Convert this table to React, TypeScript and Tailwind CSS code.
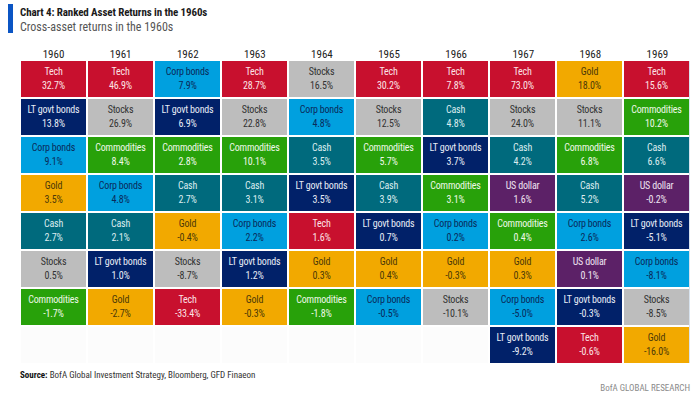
import React from 'react';

type Cell = [string, string];

const COLORS: Record<string, string> = {
  'Tech': 'bg-[#c8102e] text-[#fbe3e6]',
  'LT govt bonds': 'bg-[#012169] text-[#e6ebf5]',
  'Corp bonds': 'bg-[#00a0df] text-[#0a2a5a]',
  'Stocks': 'bg-[#bdbdbd] text-[#333333]',
  'Gold': 'bg-[#f2a900] text-[#4d3a08]',
  'Commodities': 'bg-[#28a10a] text-[#eef8e8]',
  'Cash': 'bg-[#006a7d] text-[#dcecef]',
  'US dollar': 'bg-[#5c2167] text-[#efe3f1]',
};

const YEARS: { year: string; cells: Cell[] }[] = [
  { year: '1960', cells: [['Tech', '32.7%'], ['LT govt bonds', '13.8%'], ['Corp bonds', '9.1%'], ['Gold', '3.5%'], ['Cash', '2.7%'], ['Stocks', '0.5%'], ['Commodities', '-1.7%']] },
  { year: '1961', cells: [['Tech', '46.9%'], ['Stocks', '26.9%'], ['Commodities', '8.4%'], ['Corp bonds', '4.8%'], ['Cash', '2.1%'], ['LT govt bonds', '1.0%'], ['Gold', '-2.7%']] },
  { year: '1962', cells: [['Corp bonds', '7.9%'], ['LT govt bonds', '6.9%'], ['Commodities', '2.8%'], ['Cash', '2.7%'], ['Gold', '-0.4%'], ['Stocks', '-8.7%'], ['Tech', '-33.4%']] },
  { year: '1963', cells: [['Tech', '28.7%'], ['Stocks', '22.8%'], ['Commodities', '10.1%'], ['Cash', '3.1%'], ['Corp bonds', '2.2%'], ['LT govt bonds', '1.2%'], ['Gold', '-0.3%']] },
  { year: '1964', cells: [['Stocks', '16.5%'], ['Corp bonds', '4.8%'], ['Cash', '3.5%'], ['LT govt bonds', '3.5%'], ['Tech', '1.6%'], ['Gold', '0.3%'], ['Commodities', '-1.8%']] },
  { year: '1965', cells: [['Tech', '30.2%'], ['Stocks', '12.5%'], ['Commodities', '5.7%'], ['Cash', '3.9%'], ['LT govt bonds', '0.7%'], ['Gold', '0.4%'], ['Corp bonds', '-0.5%']] },
  { year: '1966', cells: [['Tech', '7.8%'], ['Cash', '4.8%'], ['LT govt bonds', '3.7%'], ['Commodities', '3.1%'], ['Corp bonds', '0.2%'], ['Gold', '-0.3%'], ['Stocks', '-10.1%']] },
  { year: '1967', cells: [['Tech', '73.0%'], ['Stocks', '24.0%'], ['Cash', '4.2%'], ['US dollar', '1.6%'], ['Commodities', '0.4%'], ['Gold', '0.3%'], ['Corp bonds', '-5.0%'], ['LT govt bonds', '-9.2%']] },
  { year: '1968', cells: [['Gold', '18.0%'], ['Stocks', '11.1%'], ['Commodities', '6.8%'], ['Cash', '5.2%'], ['Corp bonds', '2.6%'], ['US dollar', '0.1%'], ['LT govt bonds', '-0.3%'], ['Tech', '-0.6%']] },
  { year: '1969', cells: [['Tech', '15.6%'], ['Commodities', '10.2%'], ['Cash', '6.6%'], ['US dollar', '-0.2%'], ['LT govt bonds', '-5.1%'], ['Corp bonds', '-8.1%'], ['Stocks', '-8.5%'], ['Gold', '-16.0%']] },
];

const ROWS = [0, 1, 2, 3, 4, 5, 6, 7];

export default function App() {
  return (
    <div className="w-[700px] h-[400px] bg-white overflow-hidden font-['Liberation_Sans_Narrow','Roboto_Condensed','DejaVu_Sans_Condensed',Roboto,sans-serif]">
      {/* title block */}
      <div className="flex pl-2 pt-1">
        <div className="w-[5px] h-[29px] bg-[#0b55c4]" />
        <div className="ml-[7px] mt-[1px]">
          <div className="text-[11px] leading-[15px] font-bold text-[#1a1a1a] tracking-[-0.01em]">Chart 4: Ranked Asset Returns in the 1960s</div>
          <div className="text-[12px] leading-[14px] text-[#555555]">Cross-asset returns in the 1960s</div>
        </div>
      </div>

      <div className="ml-[21px] w-[669px] mt-[15px]">
        <div className="grid grid-cols-10 gap-x-[2px] h-[12px]">
          {YEARS.map((y) => (
            <div key={y.year} className="text-center text-[11px] leading-[12px] text-[#222222]">{y.year}</div>
          ))}
        </div>
        <div className="grid grid-cols-10 gap-[2px] border-r border-[#d8e3ee]">
          {ROWS.map((r) =>
            YEARS.map((y) => {
              const cell = y.cells[r];
              if (!cell) {
                return <div key={y.year + r} className="h-[36px] bg-[#fcfcfc]" />;
              }
              return (
                <div
                  key={y.year + r}
                  className={`h-[36px] flex flex-col items-center justify-center text-[10px] leading-[14px] tracking-[-0.02em] ${COLORS[cell[0]]}`}
                >
                  <span>{cell[0]}</span>
                  <span>{cell[1]}</span>
                </div>
              );
            })
          )}
        </div>
      </div>

      <div className="ml-[20px] mt-[6px] text-[9px] leading-[12px] text-[#333333]">
        <span className="font-bold text-[#111111]">Source:</span> BofA Global Investment Strategy, Bloomberg, GFD Finaeon
      </div>
      <div className="w-[690px] text-right text-[9px] leading-[12px] text-[#8a8a8a] mt-[1px]">BofA GLOBAL RESEARCH</div>
    </div>
  );
}
